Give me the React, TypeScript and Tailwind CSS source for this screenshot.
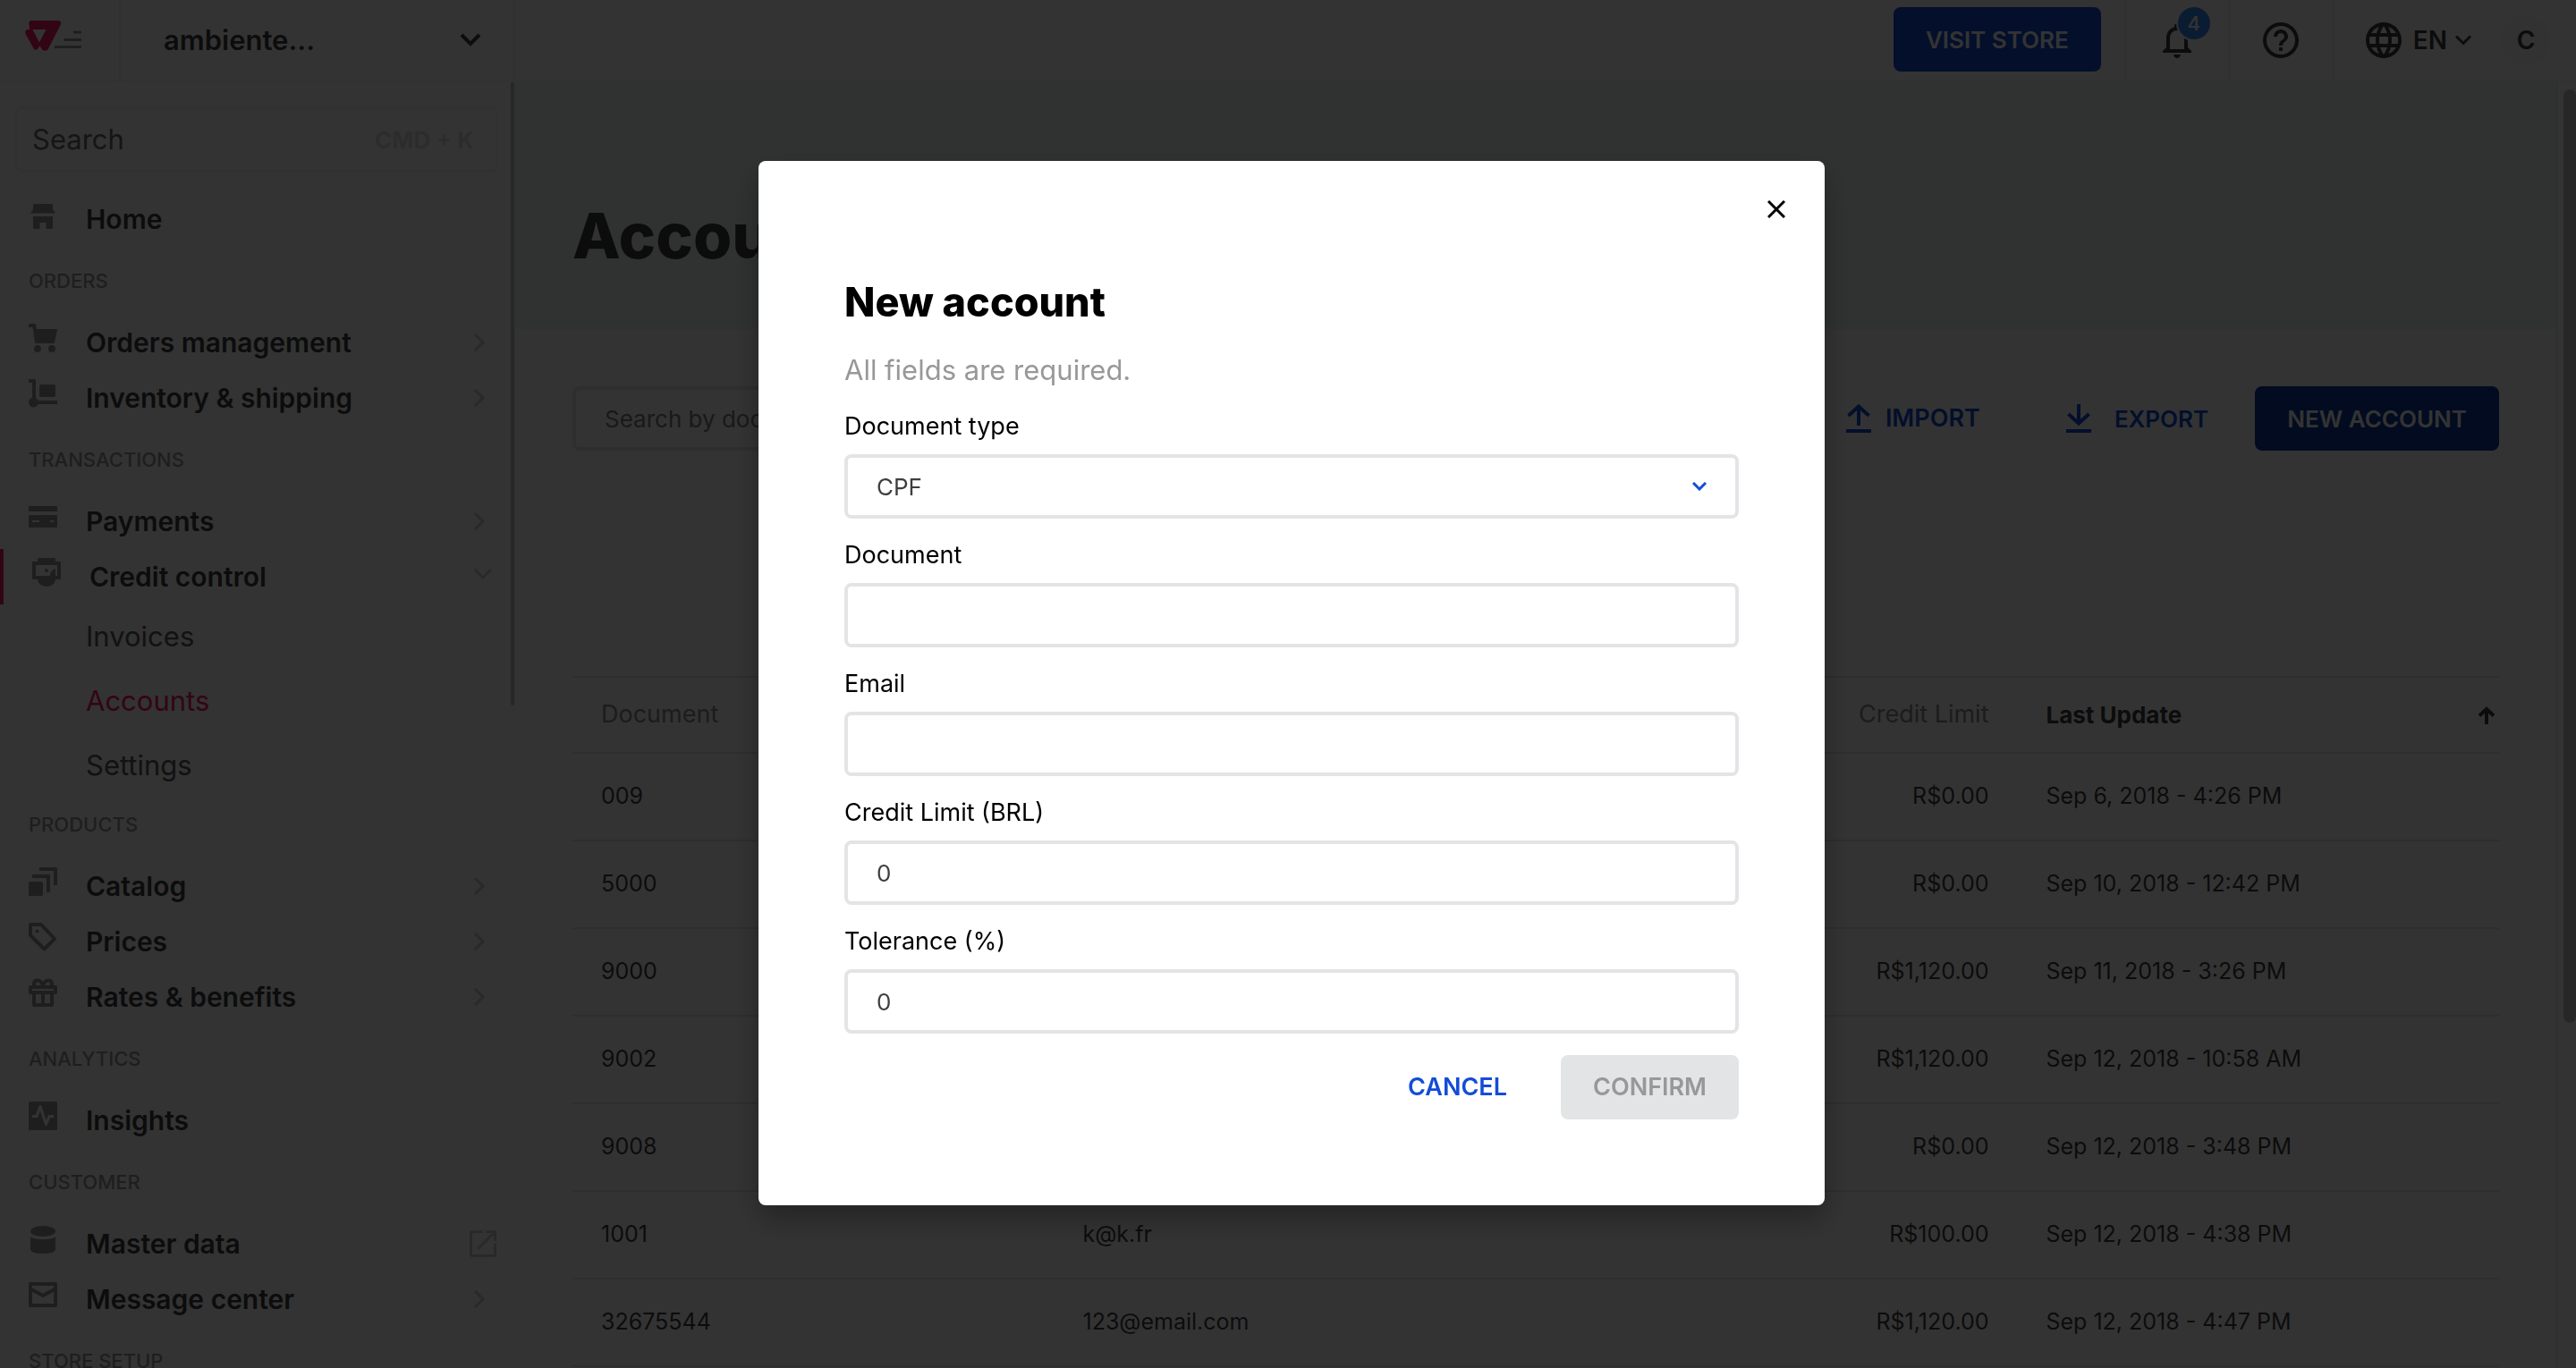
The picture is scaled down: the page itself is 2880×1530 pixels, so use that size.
import React, { useId } from "react";
import type { ReactNode } from "react";
import { MdHelpOutline, MdLanguage, MdOutlineNotifications } from "react-icons/md";

type NavItem = {
  label: string;
  icon: ReactNode;
  trailing?: "right" | "down" | "external";
  children?: { label: string; active?: boolean }[];
};
type NavGroup = { title?: string; items: NavItem[] };

function NavIcon({ children }: { children: ReactNode }) {
  return (
    <svg viewBox="0 0 32 32" className="size-8 shrink-0 text-[#979899]" fill="currentColor" aria-hidden="true">
      {children}
    </svg>
  );
}

const icons = {
  home: (
    <NavIcon>
      <path d="M6 4h20l1 1v5l3 4.500h-28l3-4.500V5z" />
      <path d="M5 18h22v13a1 1 0 0 1-1 1h-6.500v-7h-7v7H6a1 1 0 0 1-1-1z" />
    </NavIcon>
  ),
  cart: (
    <NavIcon>
      <path d="M0 0h7a1 1 0 0 1 1 1l1 5h22a1 1 0 0 1 1 1l-3 14a1 1 0 0 1-1 1H8a1 1 0 0 1-1-1L4.500 4H0z" />
      <circle cx="10" cy="28" r="4" />
      <circle cx="26" cy="28" r="4" />
    </NavIcon>
  ),
  dolly: (
    <NavIcon>
      <path d="M0 0h7a1 1 0 0 1 1 1v20H4V4H0z" />
      <circle cx="5.500" cy="26" r="5.500" />
      <rect x="8" y="24" width="24" height="4" />
      <rect x="12" y="6" width="18" height="14" rx="1.500" />
    </NavIcon>
  ),
  card: (
    <NavIcon>
      <path d="M1 4h30a1 1 0 0 1 1 1v5H0V5a1 1 0 0 1 1-1z" />
      <path fillRule="evenodd" d="M0 14h32v13a1 1 0 0 1-1 1H1a1 1 0 0 1-1-1zM4 20v2h8v-2zM24 20v2h4v-2z" />
    </NavIcon>
  ),
  credit: (
    <NavIcon>
      <path d="M7 0h18l1 1v4H6V1z" />
      <path fillRule="evenodd" d="M1 4h30a1 1 0 0 1 1 1v18a1 1 0 0 1-1 1h-5a10 8 0 0 1-20 0H1a1 1 0 0 1-1-1V5a1 1 0 0 1 1-1zM4 8v12h16q0-6 6-8v8h2V8z" />
      <circle cx="16" cy="14" r="2" />
    </NavIcon>
  ),
  catalog: (
    <NavIcon>
      <path d="M12 0h19a1 1 0 0 1 1 1v19h-4V4H12zM4 8h19a1 1 0 0 1 1 1v19h-4V12H4z" />
      <rect y="16" width="16" height="16" rx="1.500" />
    </NavIcon>
  ),
  tag: (
    <NavIcon>
      <path d="M2 2h12l15 16-11.500 11.500L2 14z" fill="none" stroke="currentColor" strokeWidth="4" strokeLinejoin="round" />
      <circle cx="9.500" cy="9.500" r="2" />
    </NavIcon>
  ),
  gift: (
    <NavIcon>
      <g fill="none" stroke="currentColor" strokeWidth="4" strokeLinejoin="round">
        <path d="M2 10h28v6H2zM6 16h20v14H6zM16 16v14" />
        <path d="M16 9C15 4 12 2 9 2.500S5 7 7 10M16 9c1-5 4-7 7-6.500S27 7 25 10" />
      </g>
    </NavIcon>
  ),
  pulse: (
    <NavIcon>
      <rect width="32" height="32" rx="1.500" />
      <path d="M4 16.500h5l4-11 6.500 20 3.500-9h5" fill="none" stroke="#ffffff" strokeWidth="3" strokeLinejoin="round" />
    </NavIcon>
  ),
  database: (
    <NavIcon>
      <ellipse cx="16" cy="7" rx="14" ry="6" />
      <path d="M2 13.500c4 3.500 24 3.500 28 0V27c0 3-5 5-14 5S2 30 2 27z" />
    </NavIcon>
  ),
  mail: (
    <NavIcon>
      <g fill="none" stroke="currentColor" strokeWidth="4" strokeLinejoin="round">
        <path d="M2 4h28v24H2z" />
        <path d="M2 9.500 16 17l14-7.500" />
      </g>
    </NavIcon>
  ),
};

const groups: NavGroup[] = [
  { items: [{ label: "Home", icon: icons.home }] },
  {
    title: "Orders",
    items: [
      { label: "Orders management", icon: icons.cart, trailing: "right" },
      { label: "Inventory & shipping", icon: icons.dolly, trailing: "right" },
    ],
  },
  {
    title: "Transactions",
    items: [
      { label: "Payments", icon: icons.card, trailing: "right" },
      {
        label: "Credit control",
        icon: icons.credit,
        trailing: "down",
        children: [{ label: "Invoices" }, { label: "Accounts", active: true }, { label: "Settings" }],
      },
    ],
  },
  {
    title: "Products",
    items: [
      { label: "Catalog", icon: icons.catalog, trailing: "right" },
      { label: "Prices", icon: icons.tag, trailing: "right" },
      { label: "Rates & benefits", icon: icons.gift, trailing: "right" },
    ],
  },
  { title: "Analytics", items: [{ label: "Insights", icon: icons.pulse }] },
  {
    title: "Customer",
    items: [
      { label: "Master data", icon: icons.database, trailing: "external" },
      { label: "Message center", icon: icons.mail, trailing: "right" },
    ],
  },
  { title: "Store setup", items: [] },
];

const rows = [
  { document: "009", email: "", limit: "R$0.00", updated: "Sep 6, 2018 - 4:26 PM" },
  { document: "5000", email: "", limit: "R$0.00", updated: "Sep 10, 2018 - 12:42 PM" },
  { document: "9000", email: "", limit: "R$1,120.00", updated: "Sep 11, 2018 - 3:26 PM" },
  { document: "9002", email: "", limit: "R$1,120.00", updated: "Sep 12, 2018 - 10:58 AM" },
  { document: "9008", email: "", limit: "R$0.00", updated: "Sep 12, 2018 - 3:48 PM" },
  { document: "1001", email: "k@k.fr", limit: "R$100.00", updated: "Sep 12, 2018 - 4:38 PM" },
  { document: "32675544", email: "123@email.com", limit: "R$1,120.00", updated: "Sep 12, 2018 - 4:47 PM" },
];

function Trailing({ kind }: { kind: "right" | "down" | "external" }) {
  return (
    <svg viewBox="0 0 30 30" className="size-[30px] shrink-0 text-[#cacbcc]" fill="none" stroke="currentColor" strokeWidth="3" aria-hidden="true">
      {kind === "right" && <path d="m6 6 9 9-9 9" />}
      {kind === "down" && <path d="m6 7 9 9 9-9" />}
      {kind === "external" && <path d="M15 1.500H3A1.500 1.500 0 0 0 1.500 3v24A1.500 1.500 0 0 0 3 28.500h24a1.500 1.500 0 0 0 1.500-1.500V15M18.500 1.500h10V12M28 2 9 21" />}
    </svg>
  );
}

function TopBar() {
  return (
    <header className="flex h-[92px] shrink-0 border-b-2 border-[#eef5f2] bg-white text-[#3f3f40]">
      <a href="#home" aria-label="VTEX home" className="flex w-[135px] shrink-0 border-r-2 border-[#ebeeed] pt-[23px] pl-7">
        <svg viewBox="0 0 64 34" className="h-[34px] w-16" aria-hidden="true">
          <path
            fillRule="evenodd"
            fill="#f71963"
            d="M7 0h30c2.500 0 4 2.200 2.800 4.400L26 31.500c-1.600 3-6 3-7.500 0L16.500 28l-2 3c-1 2-4 2-5 0L.500 15C-.6 12.500 1 10 3.500 10H5L4.500 4C4 2 5 0 7 0zM8.500 10l7.500 14.500L23.500 10z"
          />
          <path d="M54 13h9M43.500 21.500H63M33 29.500h30" stroke="#979899" strokeWidth="3" />
        </svg>
      </a>
      <button type="button" className="flex w-[441px] shrink-0 items-center justify-between border-r-2 border-[#ebeeed] pr-9 pl-12 text-[31px] font-semibold">
        ambiente...
        <svg viewBox="0 0 24 16" className="h-4 w-6" fill="none" stroke="currentColor" strokeWidth="4" aria-hidden="true">
          <path d="m2 2 10 10L22 2" />
        </svg>
      </button>
      <div className="ml-auto flex">
        <div className="flex items-start px-[26px] pt-2">
          <a href="#store" className="flex h-18 items-center rounded-lg bg-[#134cd8] px-9 text-[26px] font-semibold text-white">
            VISIT STORE
          </a>
        </div>
        <button type="button" aria-label="Notifications" className="relative flex w-[116px] items-center justify-center border-l-2 border-[#ebeeed]">
          <MdOutlineNotifications size={48} />
          <span className="absolute top-2 left-[58px] flex size-9 items-center justify-center rounded-full bg-[#368df7] text-[22px] font-medium text-white ring-2 ring-white">4</span>
        </button>
        <button type="button" aria-label="Help" className="flex w-[116px] items-center justify-center border-l-2 border-[#ebeeed]">
          <MdHelpOutline size={48} />
        </button>
        <div className="flex items-center border-l-2 border-[#ebeeed] pr-7 pl-8">
          <button type="button" className="flex items-center gap-[9px] text-[28px] font-semibold">
            <MdLanguage size={48} />
            EN
            <svg viewBox="0 0 18 12" className="h-3 w-[18px]" fill="none" stroke="currentColor" strokeWidth="3" aria-hidden="true">
              <path d="m1 1.500 8 8 8-8" />
            </svg>
          </button>
          <button type="button" aria-label="Account menu" className="ml-[33px] flex size-14 items-center justify-center rounded-full bg-[#f8fafa] text-[28px] font-semibold">
            C
          </button>
        </div>
      </div>
    </header>
  );
}

function Sidebar() {
  return (
    <aside className="flex w-[576px] shrink-0 overflow-hidden bg-white">
      <div className="min-w-0 flex-1">
        <label className="mt-[27px] mr-[14px] ml-[17px] flex h-[74px] items-center rounded-lg border-3 border-[#f2f4f5] pr-6 pl-4">
          <input type="search" aria-label="Search" placeholder="Search" className="min-w-0 flex-1 bg-transparent text-[31px] outline-none placeholder:text-[#6b6c6d]" />
          <span className="text-[26px] font-bold text-[#dcdddf]">CMD + K</span>
        </label>
        <nav className="mt-[21px]">
          {groups.map((group) => (
            <section key={group.title ?? "main"}>
              {group.title && (
                <h2 className="flex h-19 items-center pl-8 text-[22px] font-medium text-[#979899] uppercase">{group.title}</h2>
              )}
              {group.items.map((item) => (
                <div key={item.label}>
                  <a
                    href="#nav"
                    className={
                      item.children
                        ? "flex h-[62px] items-center border-l-4 border-[#f71963] pr-4 pl-8"
                        : "flex h-[62px] items-center pr-4 pl-8"
                    }
                  >
                    <span className="mt-2.5 self-start">{item.icon}</span>
                    <span className="ml-8 flex-1 text-[30px] font-semibold text-[#3f3f40]">{item.label}</span>
                    {item.trailing && <Trailing kind={item.trailing} />}
                  </a>
                  {item.children && (
                    <ul className="-mb-2">
                      {item.children.map((child) => (
                        <li key={child.label}>
                          <a
                            href="#nav"
                            className={
                              child.active
                                ? "flex h-18 items-center pl-24 text-[31px] text-[#f71963]"
                                : "flex h-18 items-center pl-24 text-[31px] text-[#585959]"
                            }
                          >
                            {child.label}
                          </a>
                        </li>
                      ))}
                    </ul>
                  )}
                </div>
              ))}
            </section>
          ))}
        </nav>
      </div>
      <div className="w-[5px] border-r border-[#eef2f1]" aria-hidden="true">
        <div className="h-[48.5%] rounded-full bg-[#c1c1c1]" />
      </div>
    </aside>
  );
}

function ImportExportIcon({ up }: { up: boolean }) {
  return (
    <svg viewBox="0 0 28 32" className="h-8 w-7" fill="none" stroke="currentColor" strokeWidth="4" aria-hidden="true">
      <path d={up ? "M14 24V3M2.500 13 14 2.500 25.500 13" : "M14 0v21M2.500 11 14 21.500 25.500 11"} />
      <path d="M0 30h28" />
    </svg>
  );
}

function AccountsPage() {
  return (
    <main className="flex min-w-0 flex-1 overflow-hidden bg-white">
      <div className="min-w-0 flex-1">
        <div className="flex h-[276px] items-end bg-[#eef6f3] px-16 pb-16">
          <h1 className="text-[70px] leading-20 font-extrabold text-[#3f3f40]">Accounts</h1>
        </div>
        <div className="px-16 pt-16">
          <div className="flex h-18 items-stretch">
            <input
              type="search"
              aria-label="Search by document"
              placeholder="Search by document"
              className="w-[40%] rounded-lg border-4 border-[#e3e4e6] px-8 text-[26px] outline-none placeholder:text-[#7d7e7f]"
            />
            <button type="button" className="ml-auto flex items-center gap-4 text-[27px] font-semibold text-[#134cd8]">
              <ImportExportIcon up />
              IMPORT
            </button>
            <button type="button" className="ml-24 flex items-center gap-[26px] text-[26px] font-semibold text-[#134cd8]">
              <ImportExportIcon up={false} />
              EXPORT
            </button>
            <button type="button" className="ml-[52px] rounded-lg bg-[#0c389f] px-9 text-[26px] font-semibold text-white">
              NEW ACCOUNT
            </button>
          </div>
          <table className="mt-[252px] w-full table-fixed border-collapse text-left text-[25px] text-[#3f3f40]">
            <thead>
              <tr className="h-[85px] border-y-2 border-[#e3e4e6]">
                <th scope="col" className="w-1/4 px-8 text-[27px] font-normal text-[#8a8b8c]">Document</th>
                <th scope="col" className="w-1/4 px-8 text-[27px] font-normal text-[#8a8b8c]">Email</th>
                <th scope="col" className="w-1/4 px-8 text-right text-[27px] font-normal text-[#8a8b8c]">Credit Limit</th>
                <th scope="col" className="w-1/4 pr-1 pl-8 text-[26px] font-bold">
                  <button type="button" className="flex w-full items-center justify-between">
                    Last Update
                    <svg viewBox="0 0 20 20" className="size-5" fill="none" stroke="currentColor" strokeWidth="4" aria-hidden="true">
                      <path d="M10 20V3M2 10.500 10 3l8 7.500" />
                    </svg>
                  </button>
                </th>
              </tr>
            </thead>
            <tbody>
              {rows.map((row) => (
                <tr key={row.document} className="h-[98px] border-b-2 border-[#e3e4e6]">
                  <td className="px-8">{row.document}</td>
                  <td className="px-8">{row.email}</td>
                  <td className="px-8 text-right">{row.limit}</td>
                  <td className="px-8">{row.updated}</td>
                </tr>
              ))}
            </tbody>
          </table>
        </div>
      </div>
      <div className="w-[22px] border-l-2 border-[#ebebeb] pt-2 pl-1.5" aria-hidden="true">
        <div className="h-[73%] rounded-full bg-[#c1c1c1]" />
      </div>
    </main>
  );
}

function Field({ label, value, options }: { label: string; value?: string; options?: string[] }) {
  const id = useId();
  const control = "h-18 w-full rounded-lg border-4 border-[#e3e4e6] bg-white px-8 text-[26px] text-[#3f3f40] outline-none";
  return (
    <div className="flex flex-col gap-3.5">
      <label htmlFor={id} className="text-[27px] leading-[34px] text-black">{label}</label>
      {options ? (
        <div className="relative">
          <select id={id} className={`${control} appearance-none`}>
            {options.map((option) => (
              <option key={option}>{option}</option>
            ))}
          </select>
          <svg viewBox="0 0 16 10" className="pointer-events-none absolute top-[31px] right-9 h-2.5 w-4 text-[#134cd8]" fill="none" stroke="currentColor" strokeWidth="3" aria-hidden="true">
            <path d="m1 1 7 7 7-7" />
          </svg>
        </div>
      ) : (
        <input id={id} type="text" defaultValue={value} className={control} />
      )}
    </div>
  );
}

function NewAccountDialog() {
  return (
    <div className="fixed inset-0 flex items-center justify-center bg-black/80 pb-0.5 pl-2">
      <div
        role="dialog"
        aria-modal="true"
        aria-labelledby="new-account-title"
        className="relative w-full max-w-[1192px] rounded-lg bg-white px-24 pt-[134px] pb-24 shadow-[0_16px_32px_rgba(0,0,0,0.3)]"
      >
        <button type="button" aria-label="Close" className="absolute top-11 right-11 text-black">
          <svg viewBox="0 0 20 20" className="size-5" fill="none" stroke="currentColor" strokeWidth="3" aria-hidden="true">
            <path d="m1 1 18 18M19 1 1 19" />
          </svg>
        </button>
        <h2 id="new-account-title" className="text-[45px] leading-12 font-extrabold text-black">New account</h2>
        <p className="mt-8 text-[31px] leading-10 text-[#979899]">All fields are required.</p>
        <form className="mt-[26px] flex flex-col gap-6">
          <Field label="Document type" options={["CPF", "CNPJ"]} />
          <Field label="Document" />
          <Field label="Email" />
          <Field label="Credit Limit (BRL)" value="0" />
          <Field label="Tolerance (%)" value="0" />
          <div className="flex h-18 justify-end gap-6">
            <button type="button" className="px-9 text-[27px] font-semibold text-[#134cd8]">CANCEL</button>
            <button type="submit" disabled className="rounded-lg bg-[#e3e4e6] px-9 text-[27px] font-semibold text-[#979899]">CONFIRM</button>
          </div>
        </form>
      </div>
    </div>
  );
}

export default function App() {
  return (
    <div className="flex h-screen flex-col overflow-hidden bg-white font-['Inter',sans-serif]">
      <TopBar />
      <div className="flex min-h-0 flex-1">
        <Sidebar />
        <AccountsPage />
      </div>
      <NewAccountDialog />
    </div>
  );
}
